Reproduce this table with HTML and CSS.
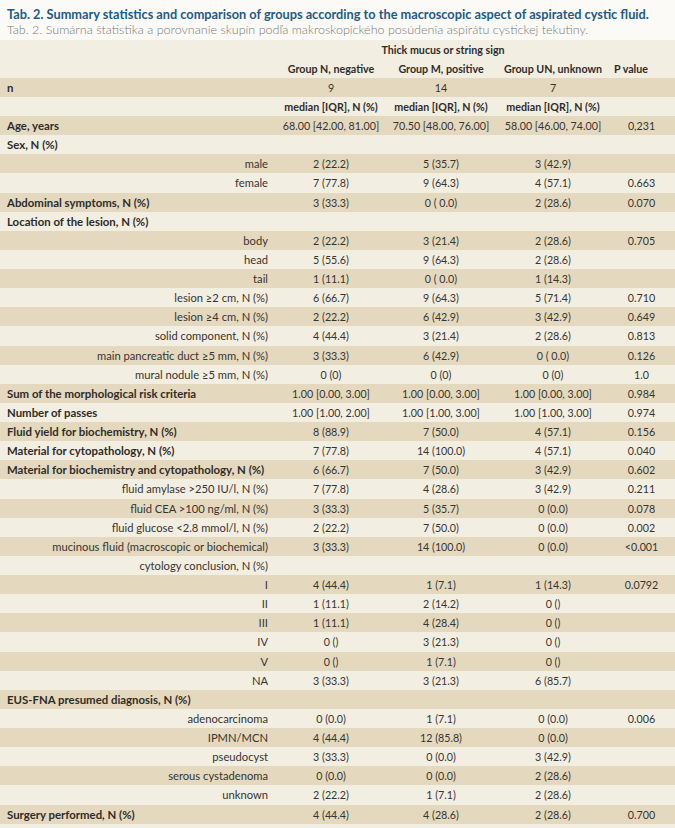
FILE: index.html
```html
<!DOCTYPE html>
<html>
<head>
<meta charset="utf-8">
<link rel="stylesheet" href="styles.css">
</head>
<body>
<div class="page">
  <div class="caption">
    <div class="title">Tab. 2. Summary statistics and comparison of groups according to the macroscopic aspect of aspirated cystic fluid.</div>
    <div class="subtitle">Tab. 2. Sumárna štatistika a porovnanie skupín podľa makroskopického posúdenia aspirátu cystickej tekutiny.</div>
  </div>
  <div class="table">
    <div class="row head"><div></div><div class="span3">Thick mucus or string sign</div><div></div></div>
    <div class="row head"><div></div><div>Group N, negative</div><div>Group M, positive</div><div>Group UN, unknown</div><div class="pv">P value</div></div>
    <div class="row dark"><div class="main">n</div><div>9</div><div>14</div><div>7</div><div></div></div>
    <div class="row light head"><div></div><div>median [IQR], N (%)</div><div>median [IQR], N (%)</div><div>median [IQR], N (%)</div><div></div></div>
    <div class="row dark"><div class="main">Age, years</div><div>68.00 [42.00, 81.00]</div><div>70.50 [48.00, 76.00]</div><div>58.00 [46.00, 74.00]</div><div>0,231</div></div>
    <div class="row light"><div class="main">Sex, N (%)</div><div></div><div></div><div></div><div></div></div>
    <div class="row dark"><div class="sub">male</div><div>2 (22.2)</div><div>5 (35.7)</div><div>3 (42.9)</div><div></div></div>
    <div class="row light"><div class="sub">female</div><div>7 (77.8)</div><div>9 (64.3)</div><div>4 (57.1)</div><div>0.663</div></div>
    <div class="row dark"><div class="main">Abdominal symptoms, N (%)</div><div>3 (33.3)</div><div>0 ( 0.0)</div><div>2 (28.6)</div><div>0.070</div></div>
    <div class="row light"><div class="main">Location of the lesion, N (%)</div><div></div><div></div><div></div><div></div></div>
    <div class="row dark"><div class="sub">body</div><div>2 (22.2)</div><div>3 (21.4)</div><div>2 (28.6)</div><div>0.705</div></div>
    <div class="row light"><div class="sub">head</div><div>5 (55.6)</div><div>9 (64.3)</div><div>2 (28.6)</div><div></div></div>
    <div class="row dark"><div class="sub">tail</div><div>1 (11.1)</div><div>0 ( 0.0)</div><div>1 (14.3)</div><div></div></div>
    <div class="row light"><div class="sub">lesion ≥2 cm, N (%)</div><div>6 (66.7)</div><div>9 (64.3)</div><div>5 (71.4)</div><div>0.710</div></div>
    <div class="row dark"><div class="sub">lesion ≥4 cm, N (%)</div><div>2 (22.2)</div><div>6 (42.9)</div><div>3 (42.9)</div><div>0.649</div></div>
    <div class="row light"><div class="sub">solid component, N (%)</div><div>4 (44.4)</div><div>3 (21.4)</div><div>2 (28.6)</div><div>0.813</div></div>
    <div class="row dark"><div class="sub">main pancreatic duct ≥5 mm, N (%)</div><div>3 (33.3)</div><div>6 (42.9)</div><div>0 ( 0.0)</div><div>0.126</div></div>
    <div class="row light"><div class="sub">mural nodule ≥5 mm, N (%)</div><div>0 (0)</div><div>0 (0)</div><div>0 (0)</div><div>1.0</div></div>
    <div class="row dark"><div class="main">Sum of the morphological risk criteria</div><div>1.00 [0.00, 3.00]</div><div>1.00 [0.00, 3.00]</div><div>1.00 [0.00, 3.00]</div><div>0.984</div></div>
    <div class="row light"><div class="main">Number of passes</div><div>1.00 [1.00, 2.00]</div><div>1.00 [1.00, 3.00]</div><div>1.00 [1.00, 3.00]</div><div>0.974</div></div>
    <div class="row dark"><div class="main">Fluid yield for biochemistry, N (%)</div><div>8 (88.9)</div><div>7 (50.0)</div><div>4 (57.1)</div><div>0.156</div></div>
    <div class="row light"><div class="main">Material for cytopathology, N (%)</div><div>7 (77.8)</div><div>14 (100.0)</div><div>4 (57.1)</div><div>0.040</div></div>
    <div class="row dark"><div class="main">Material for biochemistry and cytopathology, N (%)</div><div>6 (66.7)</div><div>7 (50.0)</div><div>3 (42.9)</div><div>0.602</div></div>
    <div class="row light"><div class="sub">fluid amylase &gt;250 IU/l, N (%)</div><div>7 (77.8)</div><div>4 (28.6)</div><div>3 (42.9)</div><div>0.211</div></div>
    <div class="row dark"><div class="sub">fluid CEA &gt;100 ng/ml, N (%)</div><div>3 (33.3)</div><div>5 (35.7)</div><div>0 (0.0)</div><div>0.078</div></div>
    <div class="row light"><div class="sub">fluid glucose &lt;2.8 mmol/l, N (%)</div><div>2 (22.2)</div><div>7 (50.0)</div><div>0 (0.0)</div><div>0.002</div></div>
    <div class="row dark"><div class="sub">mucinous fluid (macroscopic or biochemical)</div><div>3 (33.3)</div><div>14 (100.0)</div><div>0 (0.0)</div><div>&lt;0.001</div></div>
    <div class="row light"><div class="sub">cytology conclusion, N (%)</div><div></div><div></div><div></div><div></div></div>
    <div class="row dark"><div class="sub">I</div><div>4 (44.4)</div><div>1 (7.1)</div><div>1 (14.3)</div><div>0.0792</div></div>
    <div class="row light"><div class="sub">II</div><div>1 (11.1)</div><div>2 (14.2)</div><div>0 ()</div><div></div></div>
    <div class="row dark"><div class="sub">III</div><div>1 (11.1)</div><div>4 (28.4)</div><div>0 ()</div><div></div></div>
    <div class="row light"><div class="sub">IV</div><div>0 ()</div><div>3 (21.3)</div><div>0 ()</div><div></div></div>
    <div class="row dark"><div class="sub">V</div><div>0 ()</div><div>1 (7.1)</div><div>0 ()</div><div></div></div>
    <div class="row light"><div class="sub">NA</div><div>3 (33.3)</div><div>3 (21.3)</div><div>6 (85.7)</div><div></div></div>
    <div class="row dark"><div class="main">EUS-FNA presumed diagnosis, N (%)</div><div></div><div></div><div></div><div></div></div>
    <div class="row light"><div class="sub">adenocarcinoma</div><div>0 (0.0)</div><div>1 (7.1)</div><div>0 (0.0)</div><div>0.006</div></div>
    <div class="row dark"><div class="sub">IPMN/MCN</div><div>4 (44.4)</div><div>12 (85.8)</div><div>0 (0.0)</div><div></div></div>
    <div class="row light"><div class="sub">pseudocyst</div><div>3 (33.3)</div><div>0 (0.0)</div><div>3 (42.9)</div><div></div></div>
    <div class="row dark"><div class="sub">serous cystadenoma</div><div>0 (0.0)</div><div>0 (0.0)</div><div>2 (28.6)</div><div></div></div>
    <div class="row light"><div class="sub">unknown</div><div>2 (22.2)</div><div>1 (7.1)</div><div>2 (28.6)</div><div></div></div>
    <div class="row dark"><div class="main">Surgery performed, N (%)</div><div>4 (44.4)</div><div>4 (28.6)</div><div>2 (28.6)</div><div>0.700</div></div>
  </div>
</div>
</body>
</html>
```
FILE: styles.css
```css
html, body {
  margin: 0;
  padding: 0;
  background: #f3eee2;
}
.page {
  width: 675px;
  height: 828px;
  overflow: hidden;
  font-family: Lato, "Open Sans", sans-serif;
  color: #363431;
}
.caption {
  background: #fbfaf6;
  padding: 6px 0 0 7px;
  height: 33.5px;
}
.title {
  font-size: 12.75px;
  font-weight: 700;
  color: #215a86;
  line-height: 16px;
  white-space: nowrap;
}
.subtitle {
  font-size: 12.55px;
  font-weight: 300;
  color: #7d7b78;
  line-height: 16px;
  white-space: nowrap;
}
.table {
  background: #f3eee2;
}
.row {
  display: grid;
  grid-template-columns: 278px 106px 114px 110px 67px;
  height: 19.13px;
  align-items: center;
  font-size: 10.7px;
  line-height: 13px;
  text-align: center;
  white-space: nowrap;
}
.row.dark { background: #e4d9be; }
.row.light { background: #f3eee2; }
.row.head { font-weight: 700; color: #2e2c29; }
.span3 { grid-column: 2 / 5; }
.row .pv { text-align: left; padding-left: 6px; }
.main {
  text-align: left;
  padding-left: 7px;
  font-weight: 700;
  font-size: 11.4px;
  color: #2e2c29;
}
.sub {
  text-align: right;
  padding-right: 10px;
  font-size: 11.2px;
}
```
